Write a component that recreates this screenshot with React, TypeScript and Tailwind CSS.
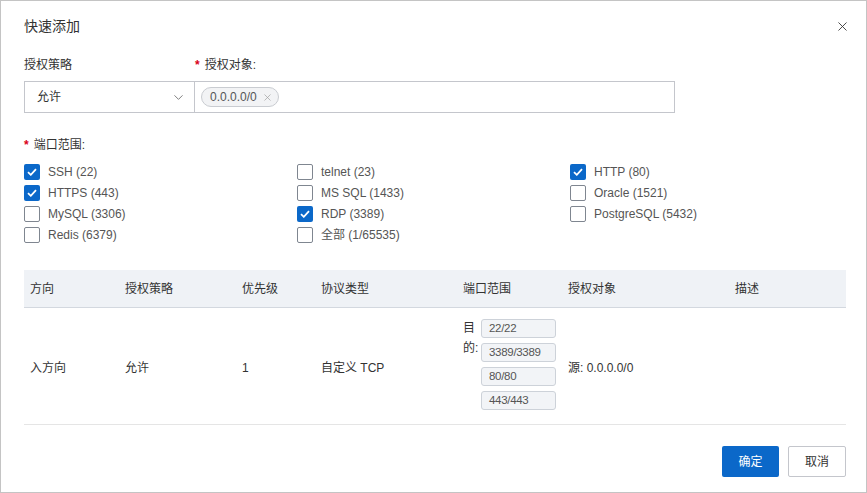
import { X, ChevronDown } from "lucide-react";

type Port = { label: string; checked: boolean };

const columns: Port[][] = [
  [
    { label: "SSH (22)", checked: true },
    { label: "HTTPS (443)", checked: true },
    { label: "MySQL (3306)", checked: false },
    { label: "Redis (6379)", checked: false },
  ],
  [
    { label: "telnet (23)", checked: false },
    { label: "MS SQL (1433)", checked: false },
    { label: "RDP (3389)", checked: true },
    { label: "全部 (1/65535)", checked: false },
  ],
  [
    { label: "HTTP (80)", checked: true },
    { label: "Oracle (1521)", checked: false },
    { label: "PostgreSQL (5432)", checked: false },
  ],
];

const headers = ["方向", "授权策略", "优先级", "协议类型", "端口范围", "授权对象", "描述"];
const ranges = ["22/22", "3389/3389", "80/80", "443/443"];

const grid = "grid grid-cols-[95px_117px_79px_142px_105px_167px_1fr]";

function Checkbox({ checked }: { checked: boolean }) {
  return checked ? (
    <span className="flex h-4 w-4 items-center justify-center rounded-[2px] bg-[#0b68c9]">
      <svg width="10" height="8" viewBox="0 0 10 8">
        <path d="M1 4.2L3.8 6.8L9 1.2" fill="none" stroke="white" strokeWidth="1.8" />
      </svg>
    </span>
  ) : (
    <span className="h-4 w-4 rounded-[2px] border border-[#7f8690] bg-white" />
  );
}

function Required({ children }: { children: string }) {
  return (
    <div className="flex h-[18px] items-center">
      <span className="mr-[5px] text-[12px] font-bold text-[#d9001b]">*</span>
      {children}
    </div>
  );
}

export default function App() {
  return (
    <div
      className="flex h-[493px] w-[867px] flex-col border border-[#c4c4c4] bg-white text-[12px] text-[#333]"
      style={{ fontFamily: '"Liberation Sans", "Noto Sans CJK SC", sans-serif' }}
    >
      <div className="flex h-[51px] items-center justify-between pl-[23px] pr-[16px]">
        <span className="text-[14px] text-[#333]">快速添加</span>
        <X size={15} strokeWidth={1.4} className="text-[#333]" />
      </div>

      <div className="flex flex-col px-[23px]">
        <div className="mt-1 flex">
          <div className="flex h-[18px] w-[171px] items-center">授权策略</div>
          <Required>授权对象:</Required>
        </div>
        <div className="mt-[7px] flex">
          <div className="flex h-8 w-[171px] items-center justify-between border border-[#c4c6cc] pl-3 pr-2">
            <span>允许</span>
            <ChevronDown size={15} strokeWidth={1.2} className="text-[#555]" />
          </div>
          <div className="flex h-8 w-[480px] items-center border border-l-0 border-[#c4c6cc] pl-[6px]">
            <span className="flex h-5 items-center gap-[5px] rounded-full border border-[#c9ccd1] bg-[#f2f3f5] pl-2 pr-[5px] text-[#555]">
              0.0.0.0/0
              <X size={11} strokeWidth={1.4} className="text-[#999]" />
            </span>
          </div>
        </div>

        <div className="mt-[23px]">
          <Required>端口范围:</Required>
        </div>
        <div className="mt-[7px] flex">
          {columns.map((col, i) => (
            <div key={i} className="flex w-[274px] flex-col">
              {col.map((p) => (
                <div key={p.label} className="flex h-[21px] items-center gap-2 text-[#555]">
                  <Checkbox checked={p.checked} />
                  <span>{p.label}</span>
                </div>
              ))}
            </div>
          ))}
        </div>

        <div className="mt-[25px] w-[822px]">
          <div className={`${grid} h-[38px] items-center border-b border-[#d3d8df] bg-[#eff2f6]`}>
            {headers.map((h) => (
              <div key={h} className="pl-[6px]">{h}</div>
            ))}
          </div>
          <div className={`${grid} h-[117px] items-center border-b border-[#e5e5e5]`}>
            <div className="mt-[3px] pl-[6px]">入方向</div>
            <div className="mt-[3px] pl-[6px]">允许</div>
            <div className="mt-[3px] pl-[6px]">1</div>
            <div className="mt-[3px] pl-[6px]">自定义 TCP</div>
            <div className="mb-[3px] flex items-start pl-[6px]">
              <span className="mt-[-1px] w-[18px] leading-[20px]">目的:</span>
              <div className="flex flex-col gap-[5px]">
                {ranges.map((r) => (
                  <span
                    key={r}
                    className="flex h-[19px] w-[75px] items-center rounded-[3px] border border-[#cdd2d9] bg-[#f2f4f7] pl-[7px] text-[11.5px] tracking-[-0.3px] text-[#555]"
                  >
                    {r}
                  </span>
                ))}
              </div>
            </div>
            <div className="mt-[3px] pl-[6px]">源: 0.0.0.0/0</div>
            <div />
          </div>
        </div>

        <div className="mt-[21px] flex w-[822px] justify-end gap-[9px]">
          <button className="h-[31px] w-[57px] rounded-[2px] bg-[#0b68c9] text-[12px] text-white">确定</button>
          <button className="h-[31px] w-[58px] rounded-[2px] border border-[#c4c6cc] bg-white text-[12px] text-[#333]">
            取消
          </button>
        </div>
      </div>
    </div>
  );
}
